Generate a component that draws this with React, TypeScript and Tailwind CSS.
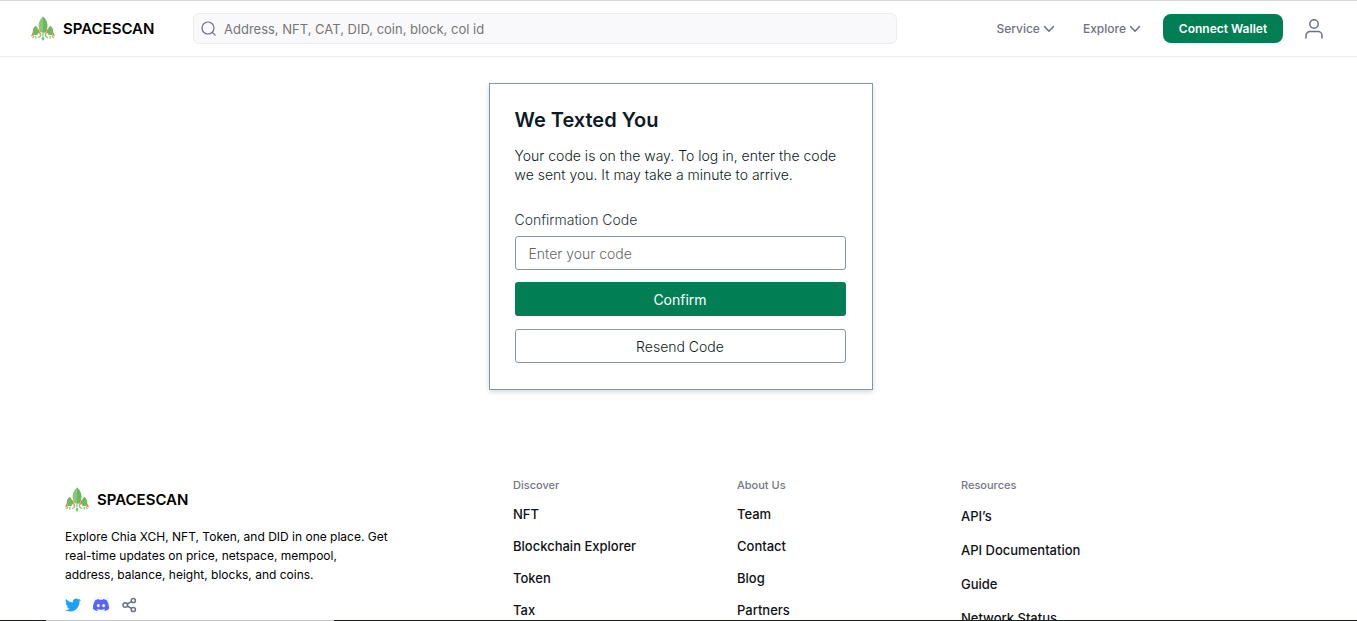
import React from "react";

const RocketLogo = () => (
  <svg width="24" height="25" viewBox="0 0 24 25" aria-hidden="true" className="shrink-0">
    <g fill="#f47a20">
      <path d="M8.200 12.500 5.500 16l3.500 2zM15.800 12.500 18.500 16 15 18zM1.700 16 0 20.500l2.800-1.200zM22.300 16l1.700 4.500-2.800-1.200z" />
    </g>
    <path d="M12 .5c3.200 2.600 4.800 6.500 4.300 10.500-.2 2-.9 3.800-1.800 5.500h-5c-.9-1.700-1.600-3.500-1.800-5.500C7.200 7 8.800 3.100 12 .5z" fill="#87c873" />
    <path d="M12 .5c3.200 2.600 4.800 6.500 4.300 10.500-.2 2-.9 3.800-1.800 5.500H12z" fill="#70b65d" />
    <path d="M4.600 9.800c2.400 1.900 3.200 4.400 2.700 7L6.400 19H2.800l-.9-2.200c-.5-2.600.3-5.100 2.700-7zM19.400 9.800c2.400 1.900 3.200 4.400 2.700 7l-.9 2.200h-3.600l-.9-2.200c-.5-2.600.3-5.100 2.700-7z" fill="#73b761" />
    <g fill="none" stroke="#8cc67a" strokeWidth="1.300" strokeLinecap="round">
      <path d="M9.500 17.500c.2 2-.6 3.500-2 4M14.500 17.500c-.2 2 .6 3.500 2 4M12 17v3M2.800 20.200l-1 1.300M21.200 20.200l1 1.300M4.800 20.500V22M19.200 20.500V22" />
    </g>
    <path d="m12 20.500 1.600 2L12 25l-1.600-2.500z" fill="#7fc06c" />
  </svg>
);

const Brand = () => (
  <a href="#home" className="flex items-center gap-2 text-[15px] leading-6 font-semibold text-black">
    <RocketLogo />
    SPACESCAN
  </a>
);

const Chevron = () => (
  <svg width="12" height="8" viewBox="0 0 12 8" fill="none" stroke="#6b7088" strokeWidth="1.500" strokeLinecap="round" strokeLinejoin="round" aria-hidden="true">
    <path d="m1.500 1.500 4.500 4.800 4.500-4.800" />
  </svg>
);

const NavMenu = ({ label }: { label: string }) => (
  <button type="button" className="flex items-center gap-[3px] text-[12px] leading-5 font-medium text-[#6f7280]">
    {label}
    <Chevron />
  </button>
);

const Header = () => (
  <header className="flex h-[57px] shrink-0 items-center border-t border-b border-t-[#d6d6d6] border-b-[#ebebeb] pr-[34px] pl-[31px]">
    <div className="w-[162px] shrink-0">
      <Brand />
    </div>
    <label className="flex h-[31px] w-[704px] min-w-0 items-center gap-2 rounded-md border border-[#ececf0] bg-[#f9f9fb] px-[7px]">
      <svg width="15" height="15" viewBox="0 0 15 15" fill="none" stroke="#6b7088" strokeWidth="1.200" strokeLinecap="round" aria-hidden="true" className="shrink-0">
        <circle cx="7" cy="7" r="6" />
        <path d="m11.500 11.500 2.700 2.700" />
      </svg>
      <input
        type="text"
        aria-label="Search"
        placeholder="Address, NFT, CAT, DID, coin, block, col id"
        className="h-7 w-full min-w-0 bg-transparent text-[13px] outline-none placeholder:text-[#757575]"
      />
    </label>
    <nav className="ml-auto flex shrink-0 items-center">
      <div className="flex gap-7">
        <NavMenu label="Service" />
        <NavMenu label="Explore" />
      </div>
      <button type="button" className="ml-[22px] h-[29px] w-[120px] rounded-lg bg-[#027e55] text-[12px] font-semibold text-white">
        Connect Wallet
      </button>
      <button type="button" aria-label="Account" className="ml-[22px]">
        <svg width="18" height="20" viewBox="0 0 18 20" fill="none" stroke="#6b7088" strokeWidth="1.500" strokeLinecap="round">
          <circle cx="9" cy="5" r="4.200" />
          <path d="M1 19v-2.500a4 4 0 0 1 4-4h8a4 4 0 0 1 4 4V19" />
        </svg>
      </button>
    </nav>
  </header>
);

const ConfirmationCard = () => (
  <form
    onSubmit={(e) => e.preventDefault()}
    className="ml-1 flex w-96 flex-col border border-[#8796a5] pt-[22px] pr-[26px] pb-[26px] pl-[25px] text-[14px] font-light text-[#0d1a20] shadow-[0_2px_5px_rgba(0,0,0,0.16)]"
  >
    <h1 className="text-[20px] leading-7 font-semibold text-[#0d1a26]">We Texted You</h1>
    <p className="mt-3 leading-[19px]">Your code is on the way. To log in, enter the code we sent you. It may take a minute to arrive.</p>
    <label htmlFor="code" className="mt-[26px] leading-[19px] text-[#2c3640]">
      Confirmation Code
    </label>
    <input
      id="code"
      type="text"
      placeholder="Enter your code"
      className="mt-[7px] h-[34px] rounded-[3px] border border-[#8796a5] px-[13px] outline-none placeholder:text-[#666666]"
    />
    <button type="submit" className="mt-3 h-[34px] rounded-[3px] bg-[#027e55] font-normal text-white">
      Confirm
    </button>
    <button type="button" className="mt-[13px] h-[34px] rounded-[3px] border border-[#8796a5]">
      Resend Code
    </button>
  </form>
);

const Socials = () => (
  <div className="mt-[13px] flex items-center gap-3">
    <a href="#twitter" aria-label="Twitter">
      <svg width="16" height="16" viewBox="0 0 24 24" fill="#1da1f2">
        <path d="M23.950 4.570a10 10 0 0 1-2.820.770 4.960 4.960 0 0 0 2.160-2.720c-.95.550-2 .95-3.130 1.180a4.920 4.920 0 0 0-8.380 4.480C7.690 8.090 4.070 6.130 1.640 3.160a4.820 4.820 0 0 0-.67 2.480c0 1.710.87 3.210 2.190 4.100a4.900 4.900 0 0 1-2.230-.62v.06a4.920 4.920 0 0 0 3.950 4.830 5 5 0 0 1-2.210.08 4.940 4.940 0 0 0 4.600 3.420A9.870 9.870 0 0 1 0 19.540a14 14 0 0 0 7.550 2.210c9.050 0 14-7.500 14-13.990 0-.21 0-.42-.02-.63a9.940 9.940 0 0 0 2.460-2.550z" />
      </svg>
    </a>
    <a href="#discord" aria-label="Discord" className="bg-[#f7f7fa]">
      <svg width="16" height="16" viewBox="0 0 24 24" fill="#5865f2">
        <path d="M20.300 4.400A19.800 19.800 0 0 0 15.400 2.900l-.6 1.300a18.300 18.300 0 0 0-5.600 0L8.600 2.900a19.700 19.700 0 0 0-4.900 1.500C.5 9-.3 13.600.1 18.100a20 20 0 0 0 6 3l1.300-2.100-1.900-.9.400-.3a14.200 14.200 0 0 0 12.200 0l.4.300-1.900.9 1.300 2.100a19.900 19.900 0 0 0 6-3c.5-5.200-.8-9.700-3.600-13.700zM8 15.300c-1.200 0-2.200-1.100-2.200-2.400S6.800 10.500 8 10.500s2.200 1.100 2.200 2.400S9.200 15.300 8 15.300zm8 0c-1.200 0-2.200-1.100-2.200-2.400s1-2.400 2.200-2.400 2.200 1.100 2.200 2.400-1 2.400-2.200 2.400z" />
      </svg>
    </a>
    <button type="button" aria-label="Share">
      <svg width="16" height="16" viewBox="0 0 16 16" fill="none" stroke="#6b7088" strokeWidth="1.500">
        <circle cx="4.300" cy="8" r="2.300" />
        <circle cx="12.300" cy="3.500" r="2.100" />
        <circle cx="12.300" cy="12.500" r="2.100" />
        <path d="m6.300 7 4.200-2.400M6.300 9l4.200 2.400" />
      </svg>
    </button>
  </div>
);

type ColumnProps = { title: string; links: string[]; roomy?: boolean };

const LinkColumn = ({ title, links, roomy }: ColumnProps) => (
  <nav aria-label={title}>
    <h2 className="text-[11px] leading-4 font-medium text-[#747785]">{title}</h2>
    <ul className={roomy ? "mt-[13px] space-y-3.5" : "mt-[11px] space-y-3"}>
      {links.map((link) => (
        <li key={link} className="text-[13px] leading-5 font-medium text-[#101114]">
          <a href="#footer">{link}</a>
        </li>
      ))}
    </ul>
  </nav>
);

const Footer = () => (
  <footer id="footer" className="mt-[87px] grid grid-cols-[4fr_2fr_2fr_3fr] pr-[60px] pl-[65px]">
    <div className="pt-[10px]">
      <Brand />
      <p className="mt-[15px] max-w-[330px] text-[12px] leading-[19px] text-black">
        Explore Chia XCH, NFT, Token, and DID in one place. Get
        <br />
        real-time updates on price, netspace, mempool,
        <br />
        address, balance, height, blocks, and coins.
      </p>
      <Socials />
    </div>
    <LinkColumn title="Discover" links={["NFT", "Blockchain Explorer", "Token", "Tax"]} />
    <LinkColumn title="About Us" links={["Team", "Contact", "Blog", "Partners"]} />
    <LinkColumn title="Resources" roomy links={["API’s", "API Documentation", "Guide", "Network Status"]} />
  </footer>
);

export default function App() {
  return (
    <div className="flex h-screen flex-col overflow-hidden bg-white font-['Inter',sans-serif]">
      <Header />
      <div className="min-h-0 flex-1 overflow-hidden">
        <main className="flex justify-center pt-[26px]">
          <ConfirmationCard />
        </main>
        <Footer />
      </div>
      <div className="flex h-px shrink-0 bg-[#1c211e]">
        <div className="ml-[46px] w-72 bg-[#c4c4c4]" />
      </div>
    </div>
  );
}
